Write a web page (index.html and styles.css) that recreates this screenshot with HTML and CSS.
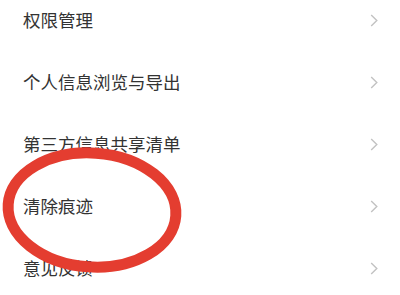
FILE: index.html
```html
<!DOCTYPE html>
<html lang="zh-CN">
<head>
    <meta charset="UTF-8">
    <meta name="viewport" content="width=device-width, initial-scale=1.0">
    <title>隐私设置</title>
    <link rel="stylesheet" href="styles.css">
</head>
<body>
    <div class="page">
        <ul class="menu">
            <li class="item">
                <span class="label">权限管理</span>
                <svg class="arrow" viewBox="0 0 8 13"><path d="M1.2 1 L6.8 6.5 L1.2 12"/></svg>
            </li>
            <li class="item">
                <span class="label">个人信息浏览与导出</span>
                <svg class="arrow" viewBox="0 0 8 13"><path d="M1.2 1 L6.8 6.5 L1.2 12"/></svg>
            </li>
            <li class="item">
                <span class="label">第三方信息共享清单</span>
                <svg class="arrow" viewBox="0 0 8 13"><path d="M1.2 1 L6.8 6.5 L1.2 12"/></svg>
            </li>
            <li class="item">
                <span class="label">清除痕迹</span>
                <svg class="arrow" viewBox="0 0 8 13"><path d="M1.2 1 L6.8 6.5 L1.2 12"/></svg>
            </li>
            <li class="item">
                <span class="label">意见反馈</span>
                <svg class="arrow" viewBox="0 0 8 13"><path d="M1.2 1 L6.8 6.5 L1.2 12"/></svg>
            </li>
        </ul>

        <!-- hand-drawn red circle over "清除痕迹" -->
        <svg class="mark" viewBox="0 0 200 150">
            <ellipse cx="92" cy="72" rx="84" ry="57" transform="rotate(4 92 72)"/>
        </svg>
    </div>
</body>
</html>
```

FILE: styles.css
```css
body {
    margin: 0;
    background: #ffffff;
    font-family: "Noto Sans CJK SC", "Noto Sans", sans-serif;
    overflow: hidden;
}
.page {
    position: relative;
    width: 400px;
    height: 295px;
    overflow: hidden;
}
.menu {
    list-style: none;
    margin: -11px 0 0 0;
    padding: 0;
}
.item {
    display: flex;
    align-items: center;
    justify-content: space-between;
    height: 62px;
    padding: 0 22px 0 23px;
}
.label {
    font-size: 17.5px;
    color: #333333;
    line-height: 1;
}
.arrow {
    width: 8px;
    height: 13px;
    fill: none;
    stroke: #c2c2c2;
    stroke-width: 1.4;
}
.mark {
    position: absolute;
    left: 0;
    top: 138px;
    width: 200px;
    height: 150px;
}
.mark ellipse {
    fill: none;
    stroke: #e43d30;
    stroke-width: 11;
}
```
